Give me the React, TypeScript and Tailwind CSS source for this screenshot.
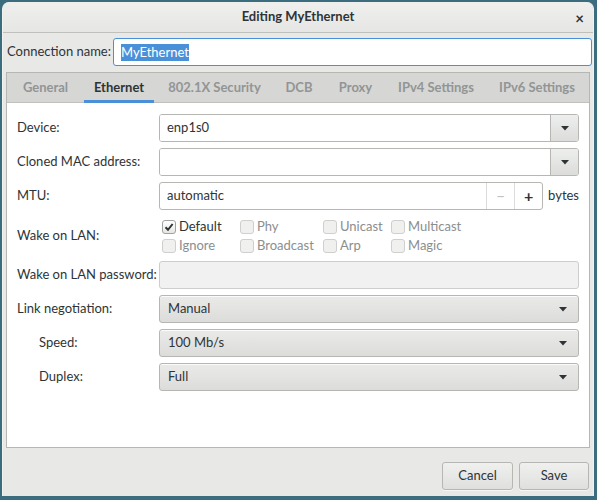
import { ReactNode } from 'react';
import clsx from 'clsx';

const font = { fontFamily: 'Lato, "Noto Sans", sans-serif' };

const tabs = [
    { name: 'General', w: 'w-[67px]' },
    { name: 'Ethernet', w: 'w-[70px]' },
    { name: '802.1X Security', w: 'w-[111px]' },
    { name: 'DCB', w: 'w-[48px]' },
    { name: 'Proxy', w: 'w-[55px]' },
    { name: 'IPv4 Settings', w: 'w-[96px]' },
    { name: 'IPv6 Settings', w: 'w-[96px]' },
];

const Arrow = () => (
    <svg width="8" height="5" viewBox="0 0 8 5" className="block">
        <path d="M0 0 H8 L4 4.5 Z" fill="#2e3436" />
    </svg>
);

const Row = ({ label, indent, children }: { label: string, indent?: boolean, children: ReactNode }) => (
    <div className="flex items-center">
        <div className={clsx('w-[142px] shrink-0 whitespace-nowrap text-[#2e3436]', indent && 'pl-[22px]')}>{label}</div>
        <div className="flex-1 min-w-0">{children}</div>
    </div>
);

const ComboEntry = ({ value }: { value: string }) => (
    <div className="flex h-[28px] rounded-[3px] border border-[#b6b6b3] overflow-hidden">
        <div className="flex-1 bg-white px-[7px] flex items-center text-[#2e3436]">{value}</div>
        <div className="w-[28px] border-l border-[#b6b6b3] bg-gradient-to-b from-[#edefee] to-[#dcdcda] flex items-center justify-center">
            <Arrow />
        </div>
    </div>
);

const ComboButton = ({ value }: { value: string }) => (
    <div className="flex items-center h-[28px] rounded-[3px] border border-[#b6b6b3] bg-gradient-to-b from-[#eaeae9] to-[#dcdcdb] pl-[8px] pr-[11px] text-[#2e3436] shadow-[inset_0_1px_0_rgba(255,255,255,0.8)]">
        <span className="flex-1">{value}</span>
        <Arrow />
    </div>
);

const Check = ({ label, checked, dim }: { label: string, checked?: boolean, dim?: boolean }) => (
    <div className="flex items-center gap-[3px] h-[19px] whitespace-nowrap">
        <div className={clsx(
            'w-[14px] h-[14px] rounded-[3px] border flex items-center justify-center',
            dim ? 'border-[#cfcfcd] bg-[#f0f0ef]' : 'border-[#a1a19f] bg-gradient-to-b from-[#ffffff] to-[#e6e6e5]'
        )}>
            {checked && (
                <svg width="10" height="10" viewBox="0 0 10 10">
                    <path d="M1.5 5.2 L4 7.8 L8.6 2" stroke="#2e3436" strokeWidth="2" fill="none" />
                </svg>
            )}
        </div>
        <span className={dim ? 'text-[#8b8e8f]' : 'text-[#2e3436]'}>{label}</span>
    </div>
);

const Button = ({ children, w }: { children: ReactNode, w: string }) => (
    <div className={clsx(w, 'h-[28px] rounded-[3px] border border-[#b6b6b3] bg-gradient-to-b from-[#f0f0ef] to-[#dfdfdd] flex items-center justify-center text-[#2e3436] shadow-[0_1px_0_rgba(255,255,255,0.6)]')}>
        {children}
    </div>
);

export default function App() {
    return (
        <div className="w-[597px] h-[500px] bg-[#3b6d7e] pt-[2px] pl-[2px] text-[13px]" style={font}>
            <div className="w-[592px] h-[494px] bg-[#e8e8e7] rounded-t-[7px] flex flex-col overflow-hidden border-x border-[#f2f2f1]">
                {/* header bar */}
                <div className="h-[31px] shrink-0 relative flex items-center justify-center border-b border-[#bfbfbc] bg-gradient-to-b from-[#efefee] to-[#e6e6e5] rounded-t-[7px]">
                    <span className="font-bold text-[#2e3436]">Editing MyEthernet</span>
                    <span className="absolute right-[9px] top-[5px] font-bold text-[15px] text-[#2e3436]">×</span>
                </div>

                {/* connection name */}
                <div className="flex items-center mt-[5px] pl-[4px] pr-[1px] whitespace-nowrap">
                    <span className="w-[106px] text-[#2e3436]">Connection name:</span>
                    <div className="flex-1 h-[28px] bg-white border border-[#4a90d9] rounded-[3px] flex items-center px-[7px]">
                        <span className="bg-[#4a90d9] text-white leading-[17px]">MyEthernet</span>
                    </div>
                </div>

                {/* notebook */}
                <div className="mt-[6px] mx-[3px] h-[376px] shrink-0 border border-[#b6b6b3] bg-white flex flex-col">
                    <div className="h-[30px] shrink-0 bg-[#d6d6d4] border-b border-[#c0c0bd] flex pl-[5px] gap-[5px] whitespace-nowrap">
                        {tabs.map(t => (
                            <div
                                key={t.name}
                                className={clsx(
                                    t.w,
                                    'flex items-center justify-center border-b-[3px] mb-[-1px] pt-[2px] font-bold',
                                    t.name === 'Ethernet'
                                        ? 'border-[#4a90d9] text-[#2e3436]'
                                        : 'border-transparent text-[#929595]'
                                )}
                            >
                                {t.name}
                            </div>
                        ))}
                    </div>

                    <div className="flex flex-col gap-[6px] pt-[11px] pl-[10px] pr-[10px]">
                        <Row label="Device:"><ComboEntry value="enp1s0" /></Row>
                        <Row label="Cloned MAC address:"><ComboEntry value="" /></Row>
                        <Row label="MTU:">
                            <div className="flex items-center gap-[5px]">
                                <div className="flex-1 flex h-[28px] rounded-[3px] border border-[#b6b6b3] bg-white overflow-hidden">
                                    <div className="flex-1 px-[7px] flex items-center text-[#2e3436]">automatic</div>
                                    <div className="w-[28px] border-l border-[#dcdcda] flex items-center justify-center text-[#c0c1c0] text-[15px]">−</div>
                                    <div className="w-[28px] border-l border-[#dcdcda] flex items-center justify-center text-[#2e3436] font-bold text-[16px]">+</div>
                                </div>
                                <span className="text-[#2e3436]">bytes</span>
                            </div>
                        </Row>
                        <Row label="Wake on LAN:">
                            <div className="grid grid-cols-[78px_83px_68px_auto] pl-[3px] pt-[1px]">
                                <Check label="Default" checked />
                                <Check label="Phy" dim />
                                <Check label="Unicast" dim />
                                <Check label="Multicast" dim />
                                <Check label="Ignore" dim />
                                <Check label="Broadcast" dim />
                                <Check label="Arp" dim />
                                <Check label="Magic" dim />
                            </div>
                        </Row>
                        <Row label="Wake on LAN password:">
                            <div className="h-[28px] rounded-[3px] border border-[#cdcdcb] bg-[#f1f1f1]" />
                        </Row>
                        <Row label="Link negotiation:"><ComboButton value="Manual" /></Row>
                        <Row label="Speed:" indent><ComboButton value="100 Mb/s" /></Row>
                        <Row label="Duplex:" indent><ComboButton value="Full" /></Row>
                    </div>
                </div>

                {/* action area */}
                <div className="flex justify-end gap-[6px] pr-[4px] pt-[14px]">
                    <Button w="w-[71px]">Cancel</Button>
                    <Button w="w-[70px]">Save</Button>
                </div>
            </div>
        </div>
    );
}
